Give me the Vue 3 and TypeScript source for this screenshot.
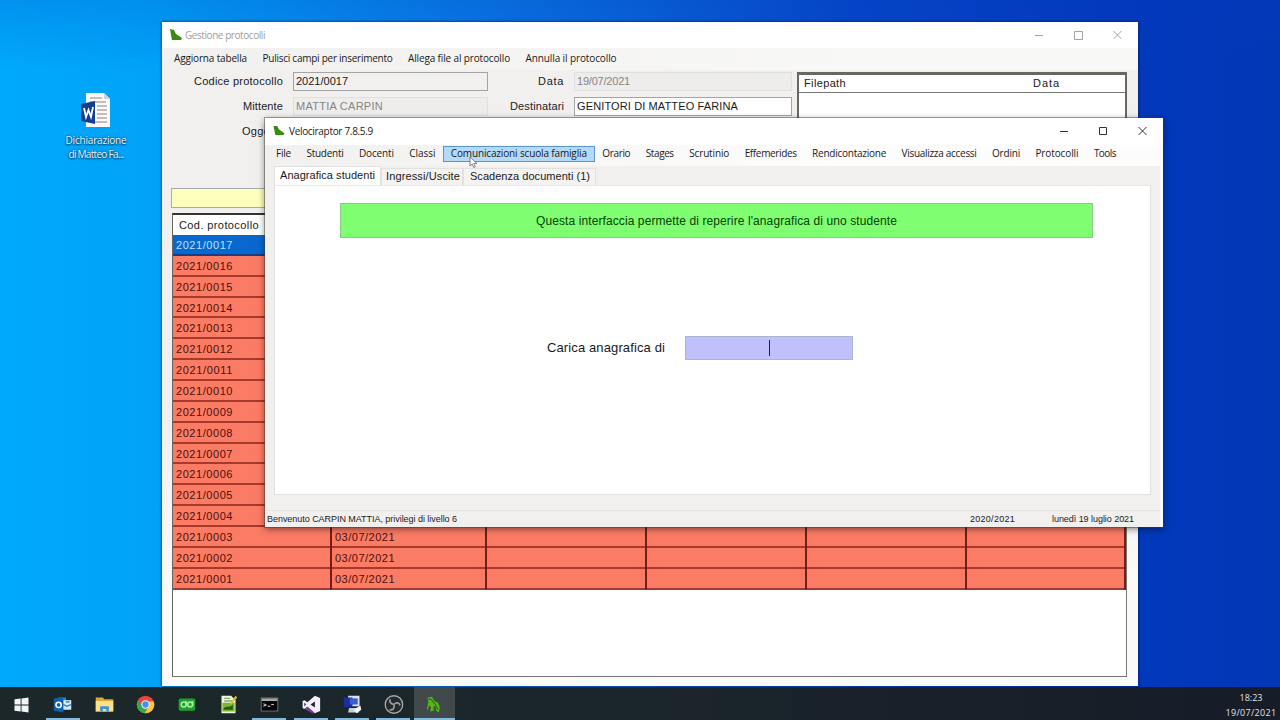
<script setup lang="ts">
interface Label { text: string; w: number }

const backMenu: Label[] = [
  { text: 'Aggiorna tabella', w: 73 },
  { text: 'Pulisci campi per inserimento', w: 130 },
  { text: 'Allega file al protocollo', w: 102 },
  { text: 'Annulla il protocollo', w: 91 },
]

const mainMenu: (Label & { hot?: boolean })[] = [
  { text: 'File', w: 15 },
  { text: 'Studenti', w: 37 },
  { text: 'Docenti', w: 35 },
  { text: 'Classi', w: 26 },
  { text: 'Comunicazioni scuola famiglia', w: 136, hot: true },
  { text: 'Orario', w: 28 },
  { text: 'Stages', w: 28 },
  { text: 'Scrutinio', w: 40 },
  { text: 'Effemerides', w: 52 },
  { text: 'Rendicontazione', w: 74 },
  { text: 'Visualizza accessi', w: 75 },
  { text: 'Ordini', w: 28 },
  { text: 'Protocolli', w: 43 },
  { text: 'Tools', w: 22 },
]

const rows = Array.from({ length: 17 }, (_, i) => ({
  code: '2021/' + String(17 - i).padStart(4, '0'),
  date: i > 13 ? '03/07/2021' : '',
}))

/* Spreads the letters of a label so that it fills the given width. */
const vFit = {
  mounted(el: HTMLElement, binding: { value: number }) {
    const n = (el.textContent ?? '').length
    const natural = el.getBoundingClientRect().width
    el.style.letterSpacing = (binding.value - natural) / n + 'px'
  },
}
</script>

<template>
  <main class="desktop">
    <div class="shortcut">
      <svg width="32" height="36" viewBox="0 0 32 36">
        <path d="M6 1h18l6 6v28H6z" fill="#fbfaf8" />
        <path d="M24 1v6h6z" fill="#c9d3d8" />
        <path d="M10 6h12M10 10h16M17 14h10M17 18h10M17 22h10M17 26h10M10 30h17" stroke="#c4bdb8" stroke-width="2" />
        <path d="M1 12l14-3v23l-14-3z" fill="#123f91" />
        <path d="M4 16l2 9 2.500-7 2.500 7 2-10" fill="none" stroke="#fff" stroke-width="1.800" />
      </svg>
      <div class="cap"><span v-fit="61">Dichiarazione</span></div>
      <div class="cap"><span v-fit="55">di Matteo Fa...</span></div>
    </div>

    <section class="window back">
      <header class="titlebar">
        <svg class="logo" width="12" height="12" viewBox="0 0 12 12"><path d="M0 0l4 1 2 4 6 4-1 2H2L1 6z" fill="#3c8a10" /></svg>
        <span class="title"><span v-fit="80">Gestione protocolli</span></span>
        <svg class="controls" width="88" height="12" viewBox="0 0 88 12" fill="none" stroke="#a2a2a2">
          <path d="M0 6.500h8M39.500 2.500h8v8h-8zM78.500 2l8 8M86.500 2l-8 8" />
        </svg>
      </header>
      <nav class="menu">
        <span v-for="m in backMenu" :key="m.text" class="item"><span v-fit="m.w">{{ m.text }}</span></span>
      </nav>
      <div class="form">
        <div class="labels first">
          <div class="label"><span v-fit="89">Codice protocollo</span></div>
          <div class="label"><span v-fit="40">Mittente</span></div>
          <div class="label"><span v-fit="41">Oggetto</span></div>
        </div>
        <div class="fields one">
          <div class="field strong"><span v-fit="52">2021/0017</span></div>
          <div class="field off"><span v-fit="87">MATTIA CARPIN</span></div>
        </div>
        <div class="labels second">
          <div class="label"><span v-fit="26">Data</span></div>
          <div class="label"><span v-fit="54">Destinatari</span></div>
        </div>
        <div class="fields two">
          <div class="field off"><span v-fit="53">19/07/2021</span></div>
          <div class="field strong white"><span v-fit="161">GENITORI DI MATTEO FARINA</span></div>
        </div>
        <div class="files">
          <div class="files-head">
            <span class="path"><span v-fit="42">Filepath</span></span>
            <span><span v-fit="27">Data</span></span>
          </div>
        </div>
      </div>
      <div class="search"></div>
      <div class="table">
        <div class="thead"><span v-fit="80">Cod. protocollo</span></div>
        <div v-for="(r, i) in rows" :key="r.code" class="row" :class="{ selected: i === 0 }">
          <div class="cell"><span v-fit="57">{{ r.code }}</span></div>
          <div class="cell"><span v-if="r.date" v-fit="60">{{ r.date }}</span></div>
          <div class="cell"></div>
          <div class="cell"></div>
          <div class="cell"></div>
          <div class="cell"></div>
        </div>
      </div>
    </section>

    <section class="window front">
      <header class="titlebar">
        <svg class="logo" width="12" height="11" viewBox="0 0 12 12"><path d="M0 1l4 0 2 4 6 4-1 2H2L1 6z" fill="#3c8a10" /></svg>
        <span class="title"><span v-fit="84">Velociraptor 7.8.5.9</span></span>
        <svg class="controls" width="88" height="12" viewBox="0 0 88 12" fill="none" stroke="#333">
          <path d="M0 6.500h8M39.500 2.500h7v7h-7zM78.500 2l8 8M86.500 2l-8 8" />
        </svg>
      </header>
      <nav class="menu">
        <span v-for="m in mainMenu" :key="m.text" class="item" :class="{ hot: m.hot }"><span v-fit="m.w">{{ m.text }}</span></span>
      </nav>
      <div class="tabs">
        <div class="tab active"><span v-fit="95">Anagrafica studenti</span></div>
        <div class="tab t2"><span v-fit="74">Ingressi/Uscite</span></div>
        <div class="tab t3"><span v-fit="120">Scadenza documenti (1)</span></div>
      </div>
      <div class="page">
        <div class="banner"><span v-fit="361">Questa interfaccia permette di reperire l'anagrafica di uno studente</span></div>
        <div class="load">
          <div class="load-label"><span v-fit="118">Carica anagrafica di</span></div>
          <div class="load-input"><i class="caret"></i></div>
        </div>
      </div>
      <footer class="status">
        <span class="s1"><span v-fit="190">Benvenuto CARPIN MATTIA, privilegi di livello 6</span></span>
        <span class="s2"><span v-fit="45">2020/2021</span></span>
        <span class="s3"><span v-fit="82">lunedì 19 luglio 2021</span></span>
      </footer>
      <svg class="pointer" width="10" height="13" viewBox="0 0 10 13"><path d="M1 1v9l2.200-2 1.600 3.500 1.500-.7L4.800 7.500H8z" fill="#fff" stroke="#555" stroke-width=".7" /></svg>
    </section>

    <footer class="taskbar">
      <div class="task">
        <svg viewBox="0 0 24 24"><path d="M4 6l7-1v7H4zM12 5l8-1v8h-8zM4 13h7v7l-7-1zM12 13h8v8l-8-1z" fill="#f4f4f4" /></svg>
      </div>
      <div class="task run">
        <svg viewBox="0 0 24 24">
          <path d="M7 4h9v5H7z" fill="#2a8ad4" /><path d="M12 7h10v11H12z" fill="#d5e9fa" /><path d="M13 12l4 2 5-2M16 9h4" fill="none" stroke="#2673bd" stroke-width="1.500" />
          <path d="M2 5l11-1v17L2 19z" fill="#0c62b0" /><circle cx="7.500" cy="12.500" r="3" fill="none" stroke="#fff" stroke-width="1.800" />
        </svg>
      </div>
      <div class="task">
        <svg viewBox="0 0 24 24"><path d="M2 4h8l2 2h10v14H2z" fill="#dfa832" /><path d="M2 8h20v12H2z" fill="#fce08a" /><path d="M7 20v-6h10v6h-3v-3h-4v3z" fill="#3f94cf" /></svg>
      </div>
      <div class="task">
        <svg viewBox="0 0 24 24">
          <circle cx="12" cy="12" r="10" fill="#e24a3b" />
          <path d="M3.400 7A10 10 0 0 0 11 22L15.500 14l-7 0z" fill="#35a853" />
          <path d="M21.400 8.500A10 10 0 0 1 11 22L16 14l0-5.500z" fill="#fac93b" />
          <circle cx="12" cy="12" r="4.800" fill="#f5f5f5" /><circle cx="12" cy="12" r="3.600" fill="#4a8df0" />
        </svg>
      </div>
      <div class="task">
        <svg viewBox="0 0 24 24"><rect x="3" y="5" width="19" height="14" rx="2" fill="#1fa02c" /><g fill="none" stroke="#a5f0a0" stroke-width="1.800"><circle cx="8.800" cy="12" r="2.800" /><circle cx="16.200" cy="12" r="2.800" /><path d="M11.500 8v4M19 8v5" /></g></svg>
      </div>
      <div class="task">
        <svg viewBox="0 0 24 24"><path d="M4 2h11l5 5v15H4z" fill="#f0f5d8" /><path d="M5 10h14v10H5z" fill="#79b82e" /><path d="M6 18c2-6 7-1 11-6v6z" fill="#29591b" /><path d="M7 5h7M7 8h9" stroke="#8aa86a" stroke-width="1.500" /><path d="M20 2l2 2-6 7-2 1 1-3z" fill="#e4b92e" /></svg>
      </div>
      <div class="task run">
        <svg viewBox="0 0 24 24"><rect x="2.500" y="4.500" width="19" height="15" fill="#080808" stroke="#777" /><path d="M3 5h18v3H3z" fill="#a8a8a8" /><path d="M5 11l3 1.500L5 14M10 14h3M14 12h3" fill="none" stroke="#ccc" stroke-width="1.200" /></svg>
      </div>
      <div class="task run">
        <svg viewBox="0 0 24 24"><path d="M17 2l6 2.500v15L17 22l-8.500-7.500L5 17l-2-1V8l2-1 3.500 2.500zM17 8.500L12 12l5 3.500zM5 9.800v4.400L7 12z" fill="#f7eefb" fill-rule="evenodd" /><path d="M5 17l3.500-2.500L17 22l-3 0z" fill="#7e3d91" /></svg>
      </div>
      <div class="task run">
        <svg viewBox="0 0 24 24"><path d="M7 2h13v12H7z" fill="#d9e4f4" /><path d="M2 4h10v11H2z" fill="#1b2e9c" /><path d="M9 5h9v7H9z" fill="#3a5fc8" /><path d="M8 16h9l2 5H7z" fill="#c6cfda" /><path d="M13 18l8-5 1 5-5 4z" fill="#f4f4ef" /></svg>
      </div>
      <div class="task run">
        <svg viewBox="0 0 24 24" fill="none"><circle cx="12.500" cy="12" r="10" fill="#25292c" stroke="#aaa" stroke-width="1.500" /><path d="M12.500 12c-4-1-6-4-4-6M12.500 12c3-3 6-2 7 1M12.500 12c1 4-1 7-5 6" stroke="#9b9b9b" stroke-width="2" /></svg>
      </div>
      <div class="task run active">
        <svg viewBox="0 0 24 24"><path d="M4 4l5-1 3 5 4 2 2 5-1 6-3-2-1-5-2 0 0 5-4 1 1-5-2-2-2 5-1-1 2-7z" fill="#55b51b" /><path d="M5 5l4 2 4 5 3 6" stroke="#2b740e" fill="none" stroke-width="1.300" /></svg>
      </div>
      <div class="clock">
        <div><span v-fit="23">18:23</span></div>
        <div><span v-fit="51">19/07/2021</span></div>
      </div>
    </footer>
  </main>
</template>

<style>
body { margin: 0; overflow: hidden; }
</style>

<style scoped>
* { box-sizing: border-box; }
.desktop {
  position: relative; width: 1280px; height: 720px; overflow: hidden;
  font: 11px/14px "Liberation Sans", Arial, sans-serif; color: #1a1a1a; white-space: nowrap;
  background:
    linear-gradient(180deg, rgba(0, 60, 190, .2), rgba(0, 60, 190, 0) 70px),
    linear-gradient(90deg, #00a9fb 0, #00a2f8 162px, #0a78e4 480px, #0645c8 860px, #0238bc 1140px, #0238b6 1280px);
}
.shortcut { position: absolute; left: 56px; top: 92px; width: 80px; display: flex; flex-direction: column; align-items: center; }
.shortcut svg { margin-bottom: 6px; }
.cap { height: 13.500px; font: 10px/13px "Open Sans", sans-serif; color: #e9f6ff; text-shadow: 0 1px 2px #00365c, 0 0 2px #00365c; }
.window { position: absolute; display: flex; flex-direction: column; background: #f1f0ef; }
.back { left: 162px; top: 22px; width: 976px; height: 664px; background: linear-gradient(180deg, #f1f0ef 60%, #fafaf9 85%); box-shadow: 0 0 2px 1px rgba(0, 20, 60, .45); }
.front { left: 265px; top: 118px; width: 898px; height: 409px; border-right: 3px solid #fafafa; box-shadow: 0 0 0 1px rgba(60, 60, 60, .45), 0 2px 7px rgba(0, 0, 0, .5); }
.titlebar { display: flex; align-items: center; height: 26px; background: #fff; font: 10px/14px "Open Sans", sans-serif; }
.front .titlebar { height: 27px; margin-right: -3px; padding-bottom: 2px; }
.logo { margin-left: 8px; }
.title { margin-left: 3px; flex: 1; }
.front .title { margin-left: 4px; }
.back .title { color: #a0a0a0; }
.controls { margin-right: 15px; }
.menu { display: flex; font: 10px/14px "Open Sans", sans-serif; }
.back .menu { height: 22px; padding: 3px 0 0 12px; gap: 15.500px; background: linear-gradient(90deg, #f1f0ef, #f8f8f7 70%); }
.front .menu { height: 21px; padding: 1px 0 0 3px; background: linear-gradient(90deg, #f1f0ef, #fcfcfc 60%); }
.front .item { height: 16px; padding: 0 7px; margin-right: -.55px; border: 1px solid transparent; line-height: 13px; }
.front .item.hot { background: #b5d9f8; border-color: #5a97c8; }
.form { display: flex; height: 98px; padding-top: 2px; }
.labels { text-align: right; font-size: 11px; }
.label { height: 25px; line-height: 19px; }
.first { width: 121px; }
.second { width: 76px; }
.fields { display: flex; flex-direction: column; gap: 6px; margin-left: 10px; }
.one { width: 195px; }
.two { width: 218px; }
.field { height: 19px; padding-left: 2px; line-height: 17px; border: 1px solid #e0e0e0; }
.field.off { color: #858585; background: #eeedec; }
.field.strong { border-color: #a4a4a4; }
.field.white { background: #fff; }
.files { width: 330px; height: 96px; margin-left: 5px; border: 2px solid #686860; border-top-width: 3px; background: #fff; }
.files-head { display: flex; height: 18px; padding: 1px 0 0 5px; border-bottom: 1px solid #777; }
.files-head .path { width: 229px; }
.search { flex: none; width: 955px; height: 20px; margin: 20px 0 0 9px; background: #ffffbd; border: 1px solid #aaa; }
.table { flex: none; width: 955px; height: 464px; margin: 5px 0 0 10px; border: 1px solid #77776f; border-top: 2px solid #333; border-left-color: #666; background: #fff; }
.thead { height: 20px; padding-left: 6px; line-height: 20px; }
.row { display: grid; grid-template-columns: 159px 155px 160px 160px 160px 159px; height: 20.860px; background: #fc7b64; border-bottom: 2px solid #a5392b; color: #4b100a; }
.row.selected { background: #0868ce; color: #b9e3ff; border-bottom-color: #183d80; }
.cell { height: 21px; padding-left: 3px; line-height: 21px; border-right: 2px solid #6e2018; }
.row.selected .cell { border-right-color: #183d80; }
.tabs { display: flex; align-items: flex-end; height: 19px; padding-left: 9px; }
.tab { height: 17px; line-height: 15px; padding: 0 5px; border: 1px solid #e2e1e0; border-bottom: 0; background: #f4f3f2; }
.tab.active { width: 107px; height: 19px; padding-top: 0; line-height: 16px; background: #fff; }
.t2 { width: 82px; padding-left: 4px; }
.t3 { padding-left: 6px; }
.page { width: 877px; height: 310px; margin-left: 9px; padding-top: 17px; border: 1px solid #e2e1e0; border-top-color: #e8e8e8; background: #fff; }
.banner { width: 753px; height: 35px; margin-left: 65px; border: 1px solid #8cc987; background: #80fe72; color: #073e04; text-align: center; line-height: 34px; font-size: 12px; }
.load { display: flex; align-items: center; margin: 98px 0 0 272px; }
.load-label { width: 138px; font-size: 13px; line-height: 22px; }
.load-input { display: flex; justify-content: center; align-items: center; width: 168px; height: 24px; background: #c0c0fd; border: 1px solid #a9b8d0; }
.caret { width: 1px; height: 16px; background: #222; }
.status { display: flex; height: 17px; margin-top: 15px; padding-left: 2px; font-size: 9px; line-height: 16px; border-top: 1px solid #e7e6e5; }
.s1 { width: 703px; }
.s2 { width: 82px; }
.pointer { position: absolute; left: 204px; top: 38px; }
.taskbar { position: absolute; left: 0; top: 687px; width: 1280px; height: 33px; display: flex; padding-left: 1px; background: linear-gradient(90deg, #1c2729, #1b262b 45%, #161c28); }
.task { display: flex; justify-content: center; width: 41.300px; height: 33px; padding-top: 7px; }
.task svg { width: 21px; height: 21px; }
.task.run { background: linear-gradient(#84b9df, #84b9df) center bottom / 34px 2px no-repeat; }
.task.run.active { background: linear-gradient(#84b9df, #84b9df) center bottom / 100% 2px no-repeat, #41494b; }
.clock { margin-left: auto; padding-top: 3px; width: 58px; text-align: center; color: #e2e2e4; font: 9px/15px "Open Sans", sans-serif; }
</style>
